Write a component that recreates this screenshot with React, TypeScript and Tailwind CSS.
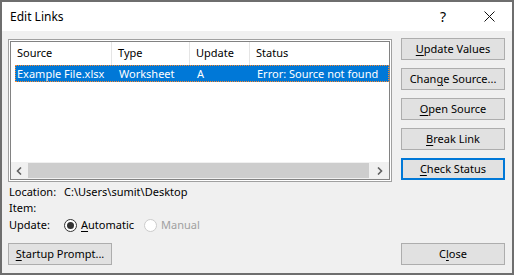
import React from 'react';

const font = { fontFamily: '"Noto Sans", "Open Sans", sans-serif' };

const U: React.FC<{ children: React.ReactNode }> = ({ children }) => <span className="underline underline-offset-2">{children}</span>;

const Btn: React.FC<{ children: React.ReactNode; focused?: boolean }> = ({ children, focused }) => (
  <div
    className={`w-[104px] h-[22px] flex items-center justify-center text-[11px] text-black bg-[#e1e1e1] ${
      focused ? 'border-2 border-[#0078d7]' : 'border border-[#adadad]'
    }`}
  >
    {children}
  </div>
);

const App: React.FC = () => {
  return (
    <div style={font} className="w-[514px] h-[275px] border-2 border-[#6e6e6e] bg-[#f0f0f0] flex flex-col overflow-hidden">
      {/* title bar */}
      <div className="h-[29px] bg-white flex items-center shrink-0">
        <span className="pl-[8px] text-[12px] text-black flex-1">Edit Links</span>
        <div className="w-[46px] h-full flex items-center justify-center text-[14px] text-black">?</div>
        <div className="w-[46px] h-full flex items-center justify-center">
          <svg width="11" height="11" viewBox="0 0 11 11">
            <path d="M0.5 0.5 L10.5 10.5 M10.5 0.5 L0.5 10.5" stroke="#111" strokeWidth="1" fill="none" />
          </svg>
        </div>
      </div>

      {/* body */}
      <div className="flex-1 flex flex-col pt-[7px] pl-[6px] pr-[7px] pb-[8px] text-[11px] text-black">
        <div className="flex gap-[9px]">
          {/* list */}
          <div className="mt-px w-[384px] h-[143px] border border-[#a0a0a0] bg-white p-px">
            <div className="h-full border border-[#828282] flex flex-col">
              <div className="h-[23px] flex shrink-0 leading-[22px]">
                <div className="w-[101px] pl-[6px] border-r border-[#e5e5e5]">Source</div>
                <div className="w-[78px] pl-[6px] border-r border-[#e5e5e5]">Type</div>
                <div className="w-[60px] pl-[6px] border-r border-[#e5e5e5]">Update</div>
                <div className="flex-1 pl-[6px]">Status</div>
              </div>
              <div className="flex-1">
                <div className="ml-[4px] h-[17px] bg-[#0078d7] text-white border border-dotted border-[#ff8728] flex leading-[15px]">
                  <div className="w-[97px] pl-[1px]">Example File.xlsx</div>
                  <div className="w-[78px] pl-[6px]">Worksheet</div>
                  <div className="w-[60px] pl-[6px]">A</div>
                  <div className="flex-1 pl-[6px] whitespace-nowrap">Error: Source not found</div>
                </div>
              </div>
              {/* horizontal scrollbar */}
              <div className="h-[17px] bg-[#f0f0f0] flex shrink-0">
                <div className="w-[17px] flex items-center justify-center">
                  <svg width="7" height="8" viewBox="0 0 7 8">
                    <path d="M5 0.5 L1.5 4 L5 7.5" stroke="#606060" strokeWidth="1.6" fill="none" />
                  </svg>
                </div>
                <div className="flex-1 my-px bg-[#cdcdcd]" />
                <div className="w-[20px] flex items-center justify-center">
                  <svg width="7" height="8" viewBox="0 0 7 8">
                    <path d="M2 0.5 L5.5 4 L2 7.5" stroke="#606060" strokeWidth="1.6" fill="none" />
                  </svg>
                </div>
              </div>
            </div>
          </div>

          {/* buttons */}
          <div className="flex flex-col gap-[8px]">
            <Btn><U>U</U>pdate Values</Btn>
            <Btn>Chan<U>g</U>e Source...</Btn>
            <Btn><U>O</U>pen Source</Btn>
            <Btn><U>B</U>reak Link</Btn>
            <Btn focused><U>C</U>heck Status</Btn>
          </div>
        </div>

        {/* info */}
        <div className="leading-[16px] pl-px pt-[2px]">
          <div className="flex">
            <span className="w-[55px]">Location:</span>
            <span>C:\Users\sumit\Desktop</span>
          </div>
          <div className="flex">
            <span className="w-[55px]">Item:</span>
          </div>
          <div className="flex items-center mt-px">
            <span className="w-[55px]">Update:</span>
            <div className="flex items-center gap-[4px]">
              <div className="w-[13px] h-[13px] rounded-full border border-[#333] bg-white flex items-center justify-center">
                <div className="w-[7px] h-[7px] rounded-full bg-[#333]" />
              </div>
              <span><U>A</U>utomatic</span>
            </div>
            <div className="flex items-center gap-[4px] ml-[10px]">
              <div className="w-[13px] h-[13px] rounded-full border border-[#cccccc] bg-white" />
              <span className="text-[#a0a0a0]">Manual</span>
            </div>
          </div>
        </div>

        <div className="mt-auto flex justify-between">
          <Btn><U>S</U>tartup Prompt...</Btn>
          <Btn>C<U>l</U>ose</Btn>
        </div>
      </div>
    </div>
  );
};

export default App;
